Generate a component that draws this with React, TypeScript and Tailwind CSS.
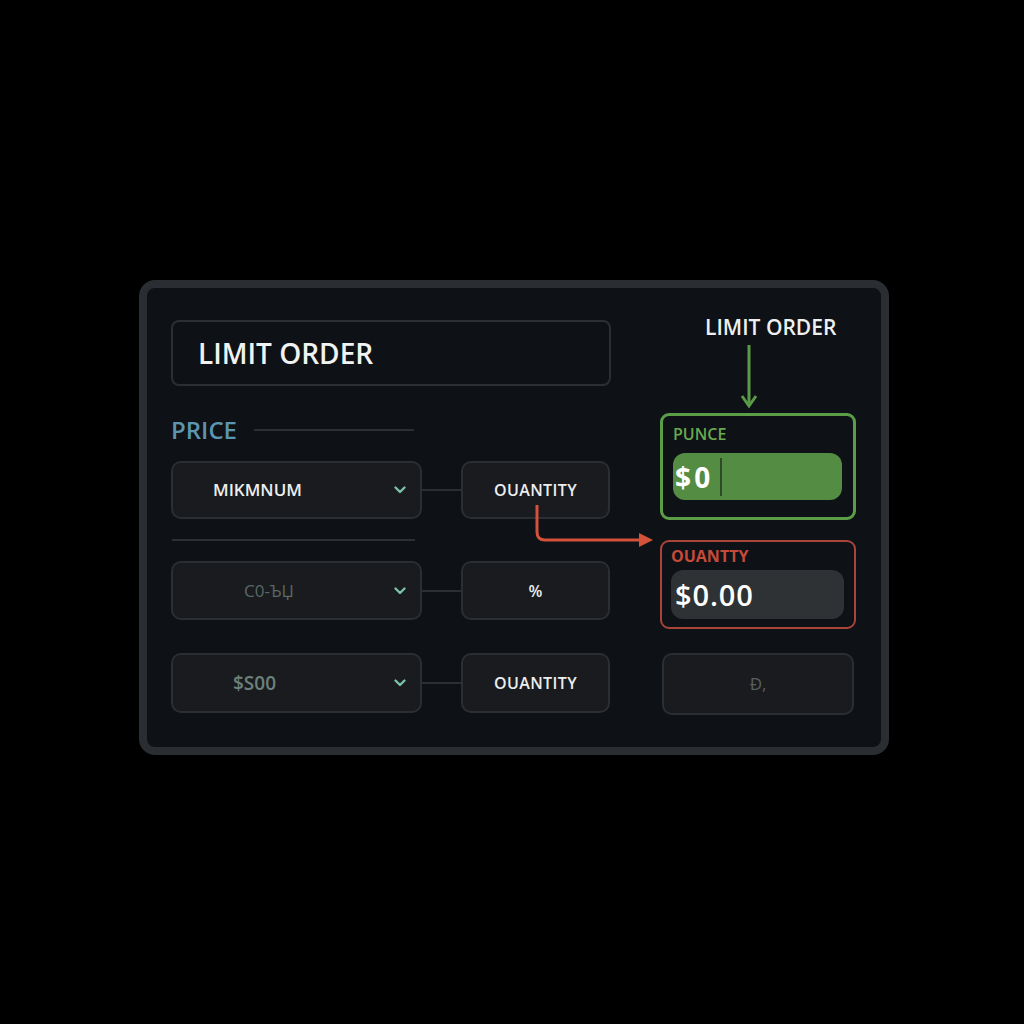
import React from "react";

const font = { fontFamily: '"Open Sans", "Liberation Sans", sans-serif' };

const Chevron = () => (
  <svg width="12" height="8" viewBox="0 0 12 8" className="shrink-0">
    <path d="M1.5 1.5 L6 6 L10.5 1.5" fill="none" stroke="#79c2a5" strokeWidth="2.4" strokeLinecap="round" strokeLinejoin="round" />
  </svg>
);

interface RowProps {
  value: string;
  valueClass: string;
  pad: string;
  right: string;
  height: string;
}

const SelectRow = ({ value, valueClass, pad, right, height }: RowProps) => (
  <div className={`flex items-center ${height}`}>
    <div className={`flex h-full w-[251px] items-center justify-between rounded-[10px] border-2 border-[#2b2e32] bg-[#191b1e] pr-[14px] ${pad}`}>
      <span className={valueClass}>{value}</span>
      <Chevron />
    </div>
    <div className="h-[2px] w-[39px] bg-[#2b2e32]" />
    <div className="flex h-full w-[149px] items-center justify-center rounded-[10px] border-2 border-[#2b2e32] bg-[#191b1e] text-[16px] font-semibold tracking-wide text-[#eceeee]">
      {right}
    </div>
  </div>
);

export default function App() {
  return (
    <div className="h-[1024px] w-[1024px] bg-black pl-[139px] pt-[280px]" style={font}>
      <div className="relative flex h-[475px] w-[750px] items-start rounded-[16px] border-[8px] border-[#2a2d31] bg-[#0e1115] pl-[24px] pt-[32px]">
        {/* left column */}
        <div className="flex w-[440px] flex-col">
          <div className="flex h-[66px] items-center rounded-[8px] border-2 border-[#2b2e32] pl-[25px] text-[28px] font-semibold text-[#f1f2f2]">
            LIMIT ORDER
          </div>
          <div className="mt-[30px] flex h-[28px] items-center">
            <span className="text-[24px] font-semibold text-[#5b95b0]">PRICE</span>
            <div className="ml-[17px] h-[2px] w-[160px] bg-[#2c3034]" />
          </div>
          <div className="mt-[17px]">
            <SelectRow value="MIKMNUM" valueClass="text-[17px] font-semibold text-[#eceeee]" pad="pl-[40px]" right="OUANTITY" height="h-[58px]" />
          </div>
          <div className="ml-[1px] mt-[20px] h-[2px] w-[243px] bg-[#2c3034]" />
          <div className="mt-[20px]">
            <SelectRow value="C0-ЪЏ" valueClass="text-[17px] text-[#5a6866]" pad="pl-[71px]" right="%" height="h-[59px]" />
          </div>
          <div className="mt-[33px]">
            <SelectRow value="$S00" valueClass="text-[19px] font-semibold text-[#6c817c]" pad="pl-[60px]" right="OUANTITY" height="h-[60px]" />
          </div>
        </div>

        {/* right column */}
        <div className="ml-[49px] flex w-[196px] flex-col">
          <div className="-mt-[5px] pl-[45px] text-[21px] font-semibold leading-[24px] text-[#eef0f0]">LIMIT ORDER</div>
          <svg width="20" height="66" viewBox="0 0 20 66" className="ml-[79px] mt-[4px]">
            <path d="M10 2 L10 60" stroke="#5a9a48" strokeWidth="3" />
            <path d="M3 53 L10 63 L17 53" fill="none" stroke="#5a9a48" strokeWidth="3" strokeLinejoin="miter" />
          </svg>
          <div className="mt-[4px] flex h-[107px] flex-col rounded-[9px] border-[3px] border-[#5c9e48] pl-[10px] pr-[11px] pt-[7px]">
            <span className="text-[16px] font-semibold leading-[22px] text-[#6aa84f]">PUNCE</span>
            <div className="mt-[8px] flex h-[47px] items-center rounded-[12px] bg-[#558c44] pl-[2px]">
              <span className="text-[28px] font-bold tracking-[0.12em] text-white">$0</span>
              <div className="ml-[6px] h-[38px] w-[2px] bg-[#2f4a28]" />
            </div>
          </div>
          <div className="mt-[20px] flex h-[89px] flex-col rounded-[9px] border-2 border-[#a8443a] pl-[9px] pr-[10px] pt-[3px]">
            <span className="text-[16px] font-bold leading-[22px] text-[#c44a3a]">OUANTTY</span>
            <div className="mt-[3px] flex h-[49px] items-center rounded-[12px] bg-[#2e3235] pl-[4px]">
              <span className="text-[29px] font-semibold tracking-[0.03em] text-white">$0.00</span>
            </div>
          </div>
          <div className="ml-[2px] mt-[24px] flex h-[62px] w-[192px] items-center justify-center rounded-[10px] border-2 border-[#2b2e32] bg-[#191b1e] text-[17px] text-[#56605e]">
            Đ,
          </div>
        </div>

        {/* quantity → quantity connector */}
        <svg className="pointer-events-none absolute left-0 top-0" width="734" height="459" viewBox="0 0 734 459">
          <path d="M390 217 L390 244 Q390 252 398 252 L496 252" fill="none" stroke="#d4513a" strokeWidth="3" />
          <path d="M492 245 L506 252 L492 259 Z" fill="#d4513a" />
        </svg>
      </div>
    </div>
  );
}
